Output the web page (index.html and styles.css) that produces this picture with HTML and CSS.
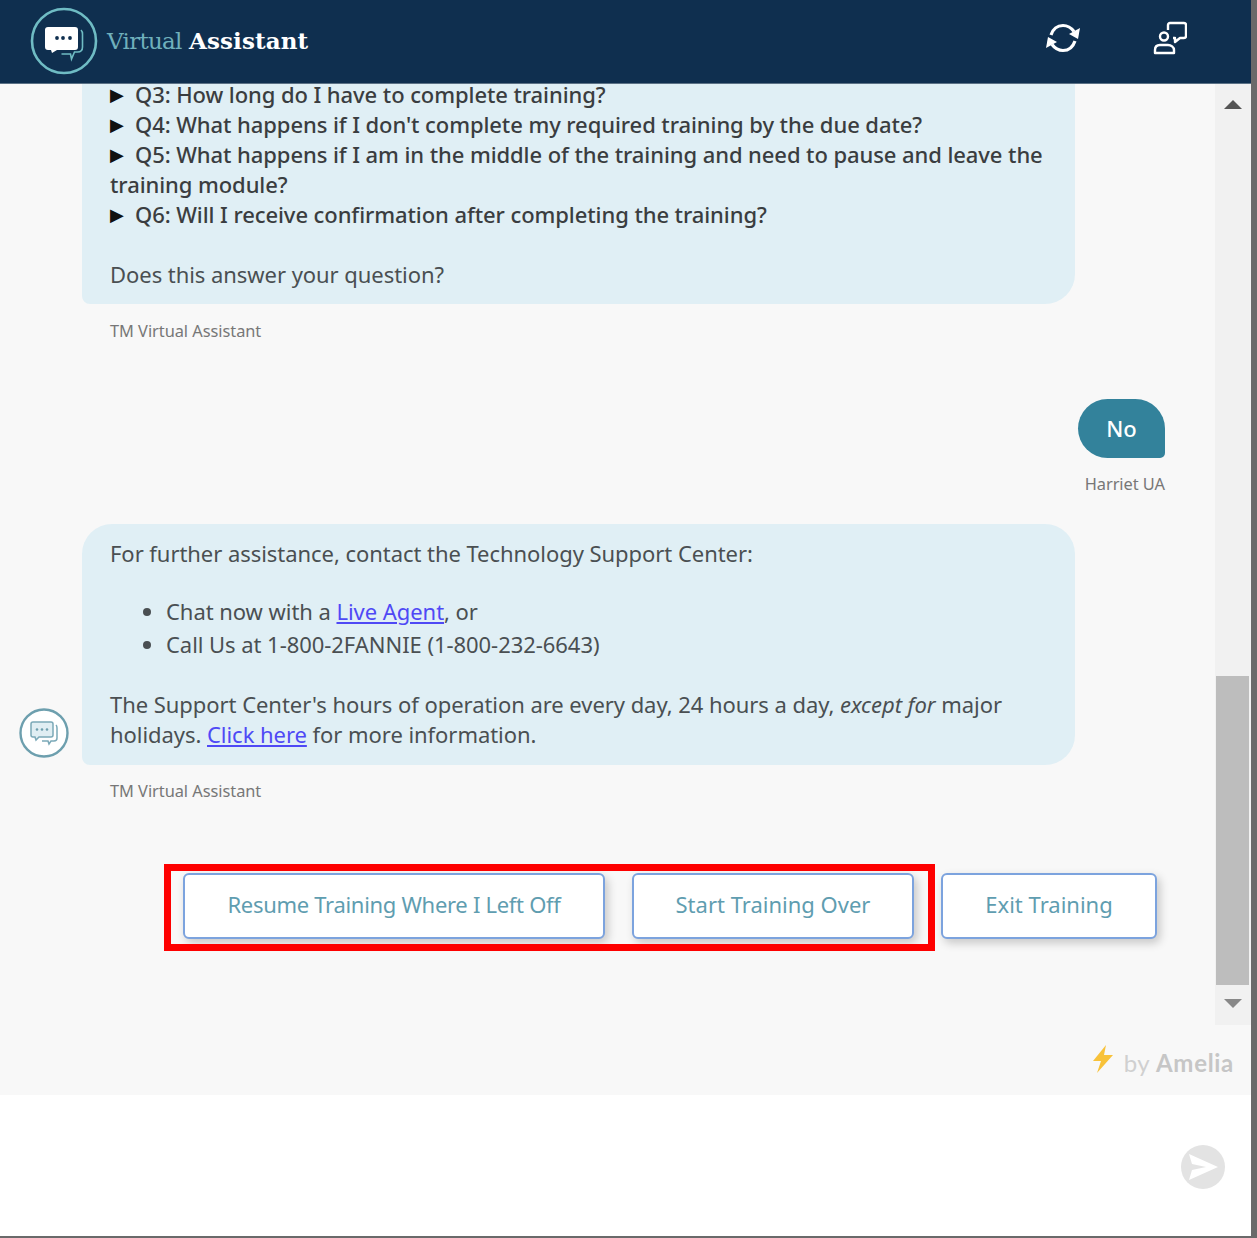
FILE: index.html
```html
<!DOCTYPE html>
<html lang="en">
<head>
<meta charset="utf-8">
<title>Virtual Assistant</title>
<link rel="stylesheet" href="styles.css">
</head>
<body>
<div class="app">
  <header class="topbar">
    <div class="brand">
      <svg class="logo" viewBox="0 0 68 68" width="68" height="68">
        <circle cx="34" cy="34" r="32" fill="none" stroke="#6fbcc4" stroke-width="2.6"/>
        <path d="M15 23a3 3 0 0 1 3-3h27a3 3 0 0 1 3 3v17a3 3 0 0 1-3 3H27l-5 3-1-3h-3a3 3 0 0 1-3-3z" fill="#fff"/>
        <circle cx="27" cy="31" r="1.900" fill="#0f2f4f"/>
        <circle cx="33" cy="31" r="1.900" fill="#0f2f4f"/>
        <circle cx="40" cy="31" r="1.900" fill="#0f2f4f"/>
        <path d="M51 23c1 1 1.500 2 1.500 4v13c0 3-2 5-5 5h-3l-3 7-1-5h-9" fill="none" stroke="#6fbcc4" stroke-width="1.600"/>
      </svg>
      <span class="title"><span class="title-light">Virtual</span> <b class="title-bold">Assistant</b></span>
    </div>
    <div class="actions">
      <svg class="action" viewBox="0 0 36 32" width="36" height="32">
        <path d="M6 13C8 7 12 3.500 18 3.500c5 0 8 2 11 6" fill="none" stroke="#fff" stroke-width="3.200"/>
        <path d="M35 6l-2 11-9-5z" fill="#fff"/>
        <path d="M30 19c-2 6-6 9.500-12 9.500-5 0-8-2-11-6" fill="none" stroke="#fff" stroke-width="3.200"/>
        <path d="M1 26l2-11 9 5z" fill="#fff"/>
      </svg>
      <svg class="action" viewBox="0 0 34 34" width="34" height="34">
        <path d="M15 9V4a2 2 0 0 1 2-2h14a2 2 0 0 1 2 2v11a2 2 0 0 1-2 2h-4l-5 4v-4h-2" fill="none" stroke="#fff" stroke-width="2.400" stroke-linejoin="round"/>
        <circle cx="11" cy="15.500" r="4" fill="none" stroke="#fff" stroke-width="2.400"/>
        <path d="M2 32v-3c0-3 2-5 5-5h8c3 0 6 2 6 5v3z" fill="none" stroke="#fff" stroke-width="2.400" stroke-linejoin="round"/>
      </svg>
    </div>
  </header>

  <div class="conversation">
    <main class="messages">
      <section class="msg msg-bot">
        <div class="bubble bubble-clipped">
          <p class="q"><span class="tri">&#9654;</span>Q3: How long do I have to complete training?</p>
          <p class="q"><span class="tri">&#9654;</span>Q4: What happens if I don't complete my required training by the due date?</p>
          <p class="q"><span class="tri">&#9654;</span>Q5: What happens if I am in the middle of the training and need to pause and leave the training module?</p>
          <p class="q"><span class="tri">&#9654;</span>Q6: Will I receive confirmation after completing the training?</p>
          <p class="after-q">Does this answer your question?</p>
        </div>
        <div class="sender sender-first">TM Virtual Assistant</div>
      </section>

      <section class="msg msg-user">
        <div class="bubble-user">No</div>
        <div class="sender sender-user">Harriet UA</div>
      </section>

      <section class="msg msg-bot msg-last">
        <svg class="avatar" viewBox="0 0 50 50" width="50" height="50">
          <circle cx="25" cy="25" r="23.500" fill="#fff" stroke="#6d9fae" stroke-width="2.400"/>
          <path d="M12 16a2 2 0 0 1 2-2h18a2 2 0 0 1 2 2v11a2 2 0 0 1-2 2H20l-3 3-1-3h-2a2 2 0 0 1-2-2z" fill="#e0eef3" stroke="#7ba9b8" stroke-width="1.500"/>
          <path d="M37 17c1 1 1 1 1 3v10c0 2-1 3-3 3h-3l-2 3-1-3h-6" fill="none" stroke="#7ba9b8" stroke-width="1.500"/>
          <circle cx="18" cy="21.500" r="1.300" fill="#6d9fae"/>
          <circle cx="23" cy="21.500" r="1.300" fill="#6d9fae"/>
          <circle cx="28" cy="21.500" r="1.300" fill="#6d9fae"/>
        </svg>
        <div class="bubble bubble-full">
          <p>For further assistance, contact the Technology Support Center:</p>
          <ul class="options">
            <li>Chat now with a <a href="#">Live Agent</a>, or</li>
            <li>Call Us at 1-800-2FANNIE (1-800-232-6643)</li>
          </ul>
          <p>The Support Center's hours of operation are every day, 24 hours a day, <em>except for</em> major holidays. <a href="#">Click here</a> for more information.</p>
        </div>
        <div class="sender">TM Virtual Assistant</div>
      </section>

      <div class="choices">
        <button class="choice choice-resume">Resume Training Where I Left Off</button>
        <button class="choice choice-start">Start Training Over</button>
        <button class="choice choice-exit">Exit Training</button>
      </div>
    </main>

    <div class="scrollbar">
      <div class="arrow arrow-up"></div>
      <div class="track"><div class="thumb"></div></div>
      <div class="arrow arrow-down"></div>
    </div>
  </div>

  <div class="credit">
    <svg class="bolt" viewBox="0 0 22 28" width="22" height="28">
      <path d="M14 0L1 16h8L5 28 21 10h-9z" fill="#f8c23a"/>
    </svg>
    <span class="credit-text">by <b>Amelia</b></span>
  </div>

  <footer class="composer">
    <svg class="send" viewBox="0 0 44 44" width="44" height="44">
      <circle cx="22" cy="22" r="22" fill="#e3e3e3"/>
      <path d="M8 9l29 13L8 35l3-10 14-3-14-3z" fill="#fff"/>
    </svg>
  </footer>
</div>
<div class="highlight"></div>
</body>
</html>
```

FILE: styles.css
```css
* { box-sizing: border-box; }
html, body { height: 100%; }
body {
  margin: 0;
  background: #6a6a6a;
  font-family: "Noto Sans", "Liberation Sans", sans-serif;
  color: #4a4f52;
  font-size: 22px;
  line-height: 30px;
  letter-spacing: -.05px;
  overflow: hidden;
}
.app {
  width: 1251px;
  height: 1236px;
  display: flex;
  flex-direction: column;
  background: #f8f8f8;
}
.topbar {
  flex: 0 0 84px;
  background: #0f2f4f;
  border-bottom: 1px solid #5c7286;
  display: flex;
  align-items: center;
  justify-content: space-between;
  padding: 0 64px 2px 30px;
}
.brand { display: flex; align-items: center; gap: 9px; }
.title { font-family: "DejaVu Serif", serif; font-size: 23px; }
.title-light { color: #6fb0bc; font-weight: 400; letter-spacing: -.7px; }
.title-bold { color: #fff; font-weight: 700; letter-spacing: .1px; }
.actions { display: flex; align-items: center; gap: 72px; margin-bottom: 5px; }
.conversation { flex: 0 0 941px; display: flex; min-height: 0; }
.messages { flex: 1; min-width: 0; overflow: hidden; }
.msg { position: relative; }
.bubble {
  margin-left: 82px;
  width: 993px;
  background: #e0eff5;
  padding: 0 20px 15px 28px;
}
.bubble p { margin: 0; }
.bubble-clipped { border-radius: 0 0 30px 8px; }
.bubble-clipped .q:first-child { margin-top: -5px; }
.q { color: #3a3d40; font-weight: 500; letter-spacing: -.08px; }
.tri { display: inline-block; width: 25px; font-family: "DejaVu Sans", sans-serif; font-size: 18px; line-height: 1; color: #111; vertical-align: 2px; }
.after-q { margin-top: 30px !important; }
.bubble-full { padding-top: 14px; padding-bottom: 16px; border-radius: 30px 30px 30px 8px; }
.options { margin: 28px 0 27px; padding-left: 56px; }
.options li { height: 33px; }
a { color: #4f49f5; }
.sender { margin: 13px 0 0 110px; font-size: 16.400px; line-height: 26px; color: #777; }
.sender-first { margin-top: 14px; }
.msg-user { margin-top: 55px; display: flex; flex-direction: column; align-items: flex-end; padding-right: 50px; }
.bubble-user {
  width: 87px;
  height: 59px;
  padding-bottom: 2px;
  background: #33829b;
  color: #fff;
  font-weight: 500;
  display: flex;
  align-items: center;
  justify-content: center;
  border-radius: 30px 30px 5px 30px;
}
.sender-user { margin: 13px 0 0; }
.msg-last { margin-top: 27px; }
.avatar { position: absolute; left: 19px; top: 184px; }
.choices { margin-top: 69px; padding-left: 183px; display: flex; }
.choice {
  height: 66px;
  background: #fff;
  border: 2px solid #7ca3de;
  border-radius: 6px;
  box-shadow: 3px 4px 10px rgba(0, 0, 0, .2);
  color: #5f9db0;
  font: 400 22px "Noto Sans", "Liberation Sans", sans-serif;
  padding: 0 0 4px;
}
.choice-resume { width: 422px; margin-right: 27px; letter-spacing: -.3px; }
.choice-start { width: 282px; margin-right: 27px; }
.choice-exit { width: 216px; }
.scrollbar { flex: 0 0 36px; background: #f1f1f1; display: flex; flex-direction: column; }
.track { flex: 1; display: flex; flex-direction: column; justify-content: flex-end; }
.thumb { height: 309px; margin: 0 2px 0 1px; background: #bdbdbd; }
.arrow { flex: 0 0 40px; display: flex; align-items: center; justify-content: center; }
.arrow-down { padding-bottom: 4px; }
.arrow-up::before { content: ""; border: 9px solid transparent; border-top: 0; border-bottom: 9px solid #555; }
.arrow-down::before { content: ""; border: 9px solid transparent; border-bottom: 0; border-top: 9px solid #888; }
.credit {
  flex: 0 0 70px;
  display: flex;
  align-items: center;
  justify-content: flex-end;
  gap: 10px;
  padding: 5px 17px 0 0;
}
.bolt { margin: -8px 0 0 0; }
.credit-text { font-family: "Lato", sans-serif; font-size: 24px; color: #d0d0d0; letter-spacing: .4px; }
.credit-text b { color: #c6c6c6; letter-spacing: .7px; }
.composer {
  flex: 1;
  background: #fff;
  display: flex;
  align-items: center;
  justify-content: flex-end;
  padding: 2px 26px 0 0;
}
.highlight {
  position: absolute;
  left: 164px;
  top: 864px;
  width: 771px;
  height: 87px;
  border: 7px solid #fe0000;
}
```
